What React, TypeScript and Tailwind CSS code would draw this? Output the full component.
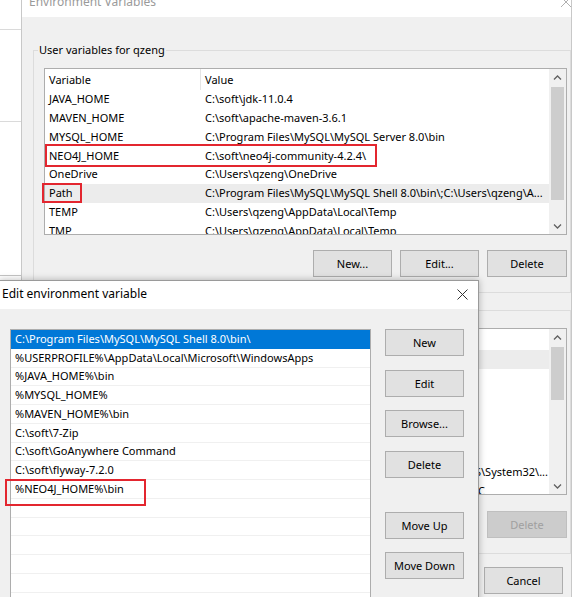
import React from 'react';

const Chevron = ({ down }: { down?: boolean }) => (
  <svg width="9" height="6" viewBox="0 0 9 6">
    <path d={down ? 'M1 1.5 L4.5 5 L8 1.5' : 'M1 4.5 L4.5 1 L8 4.5'} stroke="#606060" strokeWidth="1.3" fill="none" />
  </svg>
);

const Scrollbar = ({ thumb }: { thumb: string }) => (
  <div className="w-[17px] bg-[#f0f0f0] flex flex-col">
    <div className="h-[17px] flex items-center justify-center"><Chevron /></div>
    <div className={`mt-[1px] mx-[2px] bg-[#cdcdcd] ${thumb}`} />
    <div className="flex-1" />
    <div className="h-[17px] flex items-center justify-center"><Chevron down /></div>
  </div>
);

const Btn = ({ children, className = '', disabled }: any) => (
  <div
    className={`h-[27px] w-[79px] shrink-0 flex items-center justify-center border ${
      disabled ? 'border-[#bfbfbf] bg-[#cccccc] text-[#a0a0a0]' : 'border-[#adadad] bg-[#e1e1e1] text-black'
    } ${className}`}
  >
    {children}
  </div>
);

const userVars = [
  ['JAVA_HOME', 'C:\\soft\\jdk-11.0.4'],
  ['MAVEN_HOME', 'C:\\soft\\apache-maven-3.6.1'],
  ['MYSQL_HOME', 'C:\\Program Files\\MySQL\\MySQL Server 8.0\\bin'],
  ['NEO4J_HOME', 'C:\\soft\\neo4j-community-4.2.4\\'],
  ['OneDrive', 'C:\\Users\\qzeng\\OneDrive'],
  ['Path', 'C:\\Program Files\\MySQL\\MySQL Shell 8.0\\bin\\;C:\\Users\\qzeng\\A...'],
  ['TEMP', 'C:\\Users\\qzeng\\AppData\\Local\\Temp'],
  ['TMP', 'C:\\Users\\qzeng\\AppData\\Local\\Temp'],
];

const sysVars = [
  ['ComSpec', 'C:\\WINDOWS\\system32\\cmd.exe'],
  ['DriverData', 'C:\\Windows\\System32\\Drivers\\DriverData'],
  ['NUMBER_OF_PROCESSORS', '8'],
  ['OS', 'Windows_NT'],
  ['OnlineServices', 'Online Services'],
  ['platformcode', 'AN'],
  ['Path', 'C:\\WINDOWS\\system32;C:\\WINDOWS;C:\\WINDOWS\\System32\\...'],
  ['PATHEXT', '.COM;.EXE;.BAT;.CMD;.VBS;.VBE;.JS;.JSE;.WSF;.WSH;.MSC'],
  ['PROCESSOR_ARCHITECTURE', 'AMD64'],
];

const pathItems = [
  'C:\\Program Files\\MySQL\\MySQL Shell 8.0\\bin\\',
  '%USERPROFILE%\\AppData\\Local\\Microsoft\\WindowsApps',
  '%JAVA_HOME%\\bin',
  '%MYSQL_HOME%',
  '%MAVEN_HOME%\\bin',
  'C:\\soft\\7-Zip',
  'C:\\soft\\GoAnywhere Command',
  'C:\\soft\\flyway-7.2.0',
  '%NEO4J_HOME%\\bin',
  '', '', '', '', '', '', '',
];

const VarList = ({ rows, highlight, thumb, alignEnd }: any) => (
  <div className="mt-[10px] h-[167px] border border-[#adadad] bg-white flex">
    <div className="flex-1 min-w-0 flex flex-col overflow-hidden">
      <div className="h-[21px] shrink-0 flex items-center">
        <div className="w-[156px] h-full border-r border-[#e5e5e5] pl-[4px] flex items-center">Variable</div>
        <div className="pl-[4px]">Value</div>
      </div>
      {rows.map(([k, v]: string[], i: number) => (
        <div key={k + i} className={`h-[18.75px] shrink-0 flex items-center ${i === highlight ? 'bg-[#ececec]' : ''}`}>
          <div className="w-[156px] shrink-0 pl-[4px] whitespace-nowrap overflow-hidden">{k}</div>
          <div className={`flex-1 min-w-0 pl-[4px] whitespace-nowrap overflow-hidden flex ${alignEnd === i ? 'justify-end pr-[1px]' : ''}`}>
            {v}
          </div>
        </div>
      ))}
    </div>
    <Scrollbar thumb={thumb} />
  </div>
);

export default function App() {
  return (
    <div className="w-[586px] h-[613px] bg-white font-['Noto_Sans',sans-serif] text-[11px] text-black leading-[16px]">
      <div className="relative w-[586px] h-[597px] overflow-hidden">
        {/* window behind, left strip */}
        <div className="absolute left-0 top-0 w-[21px] h-[597px] bg-white flex flex-col">
          <div className="h-[30px] border-b border-[#dadada]" />
          <div className="h-[92px] border-b border-[#dadada]" />
          <div className="h-[154px] border-b border-[#c4c4c4]" />
        </div>

        {/* Environment Variables */}
        <div className="absolute left-[21px] top-[-13px] w-[551px] h-[640px] border-l border-r border-[#c8c8c8] bg-[#f0f0f0] flex flex-col">
          <div className="h-[30px] bg-white flex items-center justify-between pl-[7px]">
            <span className="text-[12px] text-[#9a9a9a]">Environment Variables</span>
            <svg width="10" height="10" viewBox="0 0 10 10">
              <path d="M0 0 L10 10 M10 0 L0 10" stroke="#b0b0b0" strokeWidth="1" />
            </svg>
          </div>
          <div className="pl-[11px] flex flex-col">
            <fieldset className="mt-[25px] border border-[#dcdcdc] pl-[4px] pr-[3px] pb-[15px]">
              <legend className="px-[1px] leading-[16px]">User variables for qzeng</legend>
              <div className="pl-[6px]">
                <VarList rows={userVars} highlight={5} thumb="h-[113px]" />
                <div className="mt-[15px] flex justify-end gap-[8px]">
                  <Btn>New...</Btn>
                  <Btn>Edit...</Btn>
                  <Btn className="w-[80px]">Delete</Btn>
                </div>
              </div>
            </fieldset>
            <fieldset className="mt-[9px] border border-[#dcdcdc] pl-[4px] pr-[3px] pb-[15px]">
              <legend className="px-[1px] leading-[16px]">System variables</legend>
              <div className="pl-[6px]">
                <VarList rows={sysVars} highlight={0} thumb="h-[53px]" alignEnd={6} />
                <div className="mt-[16px] flex justify-end gap-[8px]">
                  <Btn>New...</Btn>
                  <Btn>Edit...</Btn>
                  <Btn className="w-[80px]" disabled>Delete</Btn>
                </div>
              </div>
            </fieldset>
            <div className="mt-[13px] pr-[8px] flex justify-end gap-[8px]">
              <Btn>OK</Btn>
              <Btn>Cancel</Btn>
            </div>
          </div>
        </div>

        {/* Edit environment variable */}
        <div className="absolute left-[-1px] top-[280px] w-[480px] h-[330px] border border-[#9a9a9a] bg-[#f0f0f0] shadow-[0_0_7px_rgba(0,0,0,0.28)] flex flex-col">
          <div className="h-[28px] shrink-0 bg-white flex items-center justify-between pl-[2px] pb-[2px]">
            <span className="text-[12px]">Edit environment variable</span>
            <svg width="11" height="11" viewBox="0 0 11 11" className="mr-[10px]">
              <path d="M0.5 0.5 L10.5 10.5 M10.5 0.5 L0.5 10.5" stroke="#333" strokeWidth="1" />
            </svg>
          </div>
          <div className="flex pt-[20px] pl-[10px]">
            <div className="w-[361px] h-[290px] border border-[#adadad] bg-white flex flex-col overflow-hidden">
              {pathItems.map((p, i) => (
                <div
                  key={i}
                  className={`h-[18.75px] shrink-0 flex items-center pl-[4px] border-b whitespace-nowrap ${
                    i === 0 ? 'bg-[#0078d7] text-white border-[#0078d7]' : 'border-[#f0f0f0]'
                  }`}
                >
                  {p}
                </div>
              ))}
            </div>
            <div className="ml-[14px] flex flex-col">
              <Btn>New</Btn>
              <Btn className="mt-[14px]">Edit</Btn>
              <Btn className="mt-[13px]">Browse...</Btn>
              <Btn className="mt-[14px]">Delete</Btn>
              <Btn className="mt-[34px]">Move Up</Btn>
              <Btn className="mt-[13px]">Move Down</Btn>
            </div>
          </div>
        </div>

        {/* red highlight boxes */}
        <div className="absolute left-[45px] top-[144px] w-[332px] h-[23px] border-2 border-[#e3262f]" />
        <div className="absolute left-[42px] top-[183px] w-[40px] h-[20px] border-2 border-[#e3262f]" />
        <div className="absolute left-[5px] top-[479px] w-[141px] h-[27px] border-2 border-[#e3262f]" />
      </div>
    </div>
  );
}
